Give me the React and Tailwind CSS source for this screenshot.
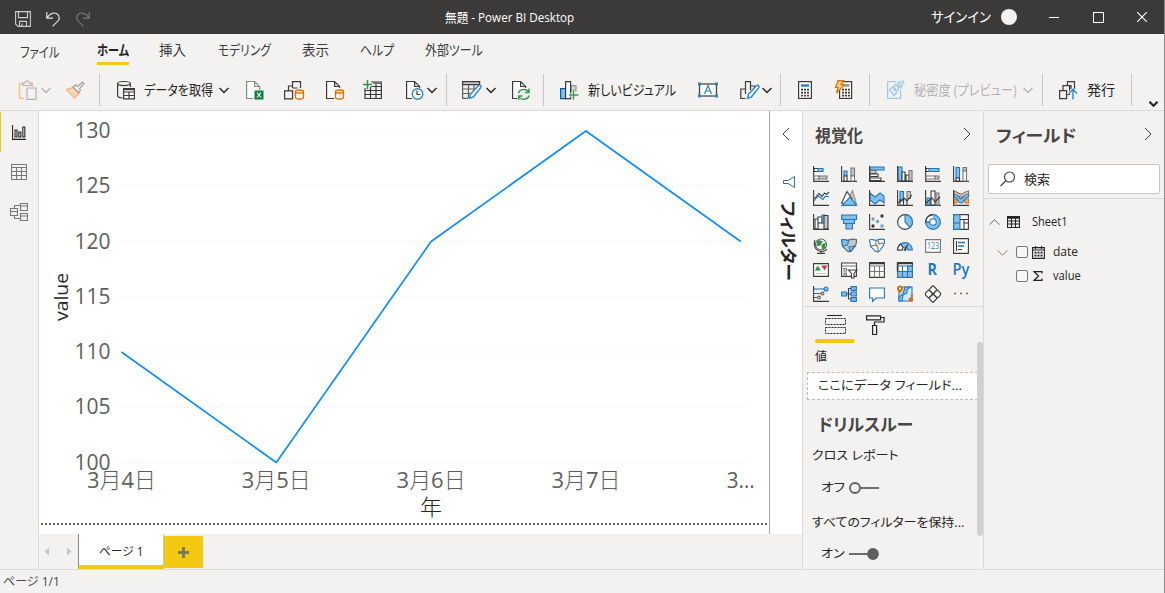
import { useLayoutEffect, useRef, useState } from "react";

// Stretches or squeezes a label so that it takes exactly `w` pixels
const Fit = ({ w, className = "", children }) => {
  const ref = useRef(null);
  const [scale, setScale] = useState(1);
  useLayoutEffect(() => {
    setScale(w / ref.current.offsetWidth);
  }, [w]);
  return (
    <div className="flex shrink-0 items-center" style={{ width: w }}>
      <span
        ref={ref}
        className={`block shrink-0 origin-left whitespace-nowrap leading-none ${className}`}
        style={{ transform: `scaleX(${scale})` }}
      >
        {children}
      </span>
    </div>
  );
};

const Chevron = ({ className = "", dir = "down", size = 10, width = 1.3 }) => {
  const paths = {
    down: "M0.5 3L5 7.5L9.5 3",
    up: "M0.5 7L5 2.5L9.5 7",
    left: "M7.5 0L2.5 5L7.5 10",
    right: "M2.5 0L7.5 5L2.5 10",
  };
  return (
    <svg
      className={`shrink-0 overflow-visible ${className}`}
      width={size}
      height={size}
      viewBox="0 0 10 10"
      fill="none"
      stroke="currentColor"
      strokeWidth={width}
    >
      <path d={paths[dir]} />
    </svg>
  );
};

const Icon = ({ className = "", children }) => (
  <svg
    className={`h-5 w-5 shrink-0 overflow-visible ${className}`}
    viewBox="0 0 20 20"
    fill="none"
    stroke="#3b3a39"
    strokeWidth="1.2"
  >
    {children}
  </svg>
);

const Sep = ({ className = "" }) => (
  <div className={`h-8 w-px shrink-0 bg-[#c8c6c4] ${className}`} />
);

const TitleBar = () => (
  <div className="flex h-[34px] shrink-0 items-center bg-[#3b3a39] text-[13px] text-white">
    <svg className="ml-[15px] mt-1 h-4 w-4" viewBox="0 0 16 16" fill="none" stroke="#d0cecc" strokeWidth="1.1">
      <path d="M.6.6h14.8v14.8H3L.6 13zM3.5.6v6h9v-6M4.5 15.4v-5h7v5M7 15.4v-3" />
    </svg>
    <svg className="ml-[14px] mt-1 h-4 w-4" viewBox="0 0 16 16" fill="none" stroke="#e1dfdd" strokeWidth="1.2">
      <path d="M1.8 1v6.2H8M2 7C5 2 9.500.8 12.500 3.200C15 5.500 14.500 8.500 12.800 10.200L7.500 15.400" />
    </svg>
    <svg className="ml-[14px] mt-1 h-4 w-4" viewBox="0 0 16 16" fill="none" stroke="#797775" strokeWidth="1.2">
      <path d="M14.200 1v6.200H8M14 7C11 2 6.500.8 3.500 3.200C1 5.500 1.500 8.500 3.200 10.200L8.500 15.400" />
    </svg>
    <div className="ml-[354px]">
      <Fit w={129}>無題 - Power BI Desktop</Fit>
    </div>
    <div className="ml-[357px]">
      <Fit w={60} className="text-[14px]">サインイン</Fit>
    </div>
    <div className="ml-[10px] h-4 w-4 rounded-full bg-[#f3f2f1]" />
    <div className="ml-8 h-px w-[10px] bg-white" />
    <div className="ml-[34px] h-[11px] w-[11px] border border-white" />
    <svg className="ml-[33px] h-[10px] w-[10px]" viewBox="0 0 10 10" stroke="#fff" strokeWidth="1.100">
      <path d="M0 0L10 10M10 0L0 10" />
    </svg>
  </div>
);

const Tabs = () => (
  <div className="flex h-8 shrink-0 items-center text-[14px] text-[#3b3a39]">
    <div className="ml-5 mt-1">
      <Fit w={39}>ファイル</Fit>
    </div>
    <div className="ml-[38px] flex h-full flex-col justify-between pt-[9px] pb-px font-bold text-[#252423]">
      <Fit w={32}>ホーム</Fit>
      <div className="h-[3px] bg-[#f2c811]" />
    </div>
    <div className="ml-[30px]"><Fit w={27}>挿入</Fit></div>
    <div className="ml-8"><Fit w={53}>モデリング</Fit></div>
    <div className="ml-[31px]"><Fit w={27}>表示</Fit></div>
    <div className="ml-[31px]"><Fit w={34}>ヘルプ</Fit></div>
    <div className="ml-[31px]"><Fit w={58}>外部ツール</Fit></div>
  </div>
);

const Cylinder = () => (
  <path
    d="M11 11.500v6c0 2 8 2 8 0v-6c0-2-8-2-8 0c0 2 8 2 8 0"
    fill="#fff4e5"
    stroke="#d8700f"
    strokeWidth="1.300"
  />
);

const Pencil = () => (
  <path
    d="M7.500 18.500l1-4.500l8-8.500c1.500-1 3.300.6 2.300 2.200L11.500 17z"
    fill="#e3f1fb"
    stroke="#2b88c8"
    strokeWidth="1.400"
  />
);

const Toolbar = () => (
  <div className="flex h-[44px] shrink-0 items-center pt-1 text-[14px] text-[#252423]">
    <Icon className="ml-[18px]">
      <path d="M6 18.500H1.500v-15H5M12 3.500h2.500V7" stroke="#f0c08f" strokeWidth="1.400" />
      <path d="M5 5.500V3h2c0-3 4-3 4 0h2v2.500zM9 8h9v11.300H9z" fill="#f3f2f1" stroke="#b5b3b1" />
    </Icon>
    <Chevron className="ml-[3px] text-[#b5b3b1]" />
    <Icon className="ml-[14px]">
      <path d="M1.500 9.500l6.500-2l6.500 6l-5 4.500z" fill="#f8d5b2" stroke="#eeb889" />
      <path d="M8 7l2.500-2l2 1.500l5-4.500l1.500 1.500l-4.500 5l1 1.500l-2 2.500z" fill="#f3f2f1" stroke="#a19f9d" />
    </Icon>
    <Sep className="ml-[14px]" />
    <Icon className="ml-4">
      <path d="M1.600 3.500v12c0 1.500 2 2.300 5 2.500M14.400 7V3.500M1.600 3.500c0-2.700 12.800-2.700 12.800 0c0 2.700-12.800 2.700-12.800 0" />
      <path d="M7.600 8.600h10.800v10.300H7.600zM7.600 12h10.800M7.600 15.500h10.800M13 12v7" fill="#fff" />
      <path d="M7.600 9.200h10.800" strokeWidth="2" />
    </Icon>
    <div className="ml-2"><Fit w={69}>データを取得</Fit></div>
    <Chevron className="ml-[6px]" width={1.4} />
    <Icon className="ml-4">
      <path d="M8 18.500H1.600v-17h8l5 5V10M9.600 1.500v5h5" fill="#fff" stroke="#8a8886" />
      <rect x="9.500" y="10.500" width="9" height="9" fill="#107c41" stroke="none" />
      <path d="M12 12.500l4 5M16 12.500l-4 5" stroke="#fff" />
    </Icon>
    <Icon className="ml-[19px]">
      <path d="M4.500 11V6h4M8.500 8V1.600h8V8M8.500 8h5M.6 10.800h8v8h-8z" />
      <g transform="translate(.5 0)"><Cylinder /></g>
    </Icon>
    <Icon className="ml-[21px]">
      <path d="M9 18.500H1.600v-17h8l5 5V8M9.600 1.500v5h5" fill="#fff" />
      <g transform="translate(-.5 0)"><Cylinder /></g>
    </Icon>
    <Icon className="ml-[18px]">
      <path d="M2 8v10.500h16.400V2H8M2 10.500h16.400M2 14.500h16.400M7.500 7v11.500M13 3v15.500M8 6.500h10.400" fill="none" />
      <path d="M10 3h8.400" stroke="#797775" strokeWidth="2" />
      <path d="M4.500 0v9M0 4.500h9" stroke="#f3f2f1" strokeWidth="3.500" />
      <path d="M4.500 0v9M0 4.500h9" stroke="#2d9346" strokeWidth="1.500" />
    </Icon>
    <Icon className="ml-[22px]">
      <path d="M7 18.500H1.600v-17h8l5 5V8M9.600 1.500v5h5" fill="#fff" />
      <circle cx="12.500" cy="14" r="5.300" fill="#fff" stroke="#2b88c8" strokeWidth="1.400" />
      <path d="M12 10.500v4h3.500" />
    </Icon>
    <Chevron className="ml-[2px]" width={1.4} />
    <Sep className="ml-[9px]" />
    <Icon className="ml-[15px]">
      <path d="M.6 1.600h17v3H.6z" fill="#c8c6c4" />
      <path d="M.6 4.600v13.800H6M17.600 4.600V6M.6 9h12M.6 13.500h8M6.500 4.600V18M12 4.600V10" stroke="#605e5c" />
      <Pencil />
    </Icon>
    <Chevron className="ml-[4px]" width={1.4} />
    <Icon className="ml-[15px]">
      <path d="M6 18.500H1.600v-17h8l5 5V8M9.600 1.500v5h5" fill="#fff" />
      <path d="M7.500 13.500c1-5 8-5 10-1.500M18 8.500v4h-4M18 15.500c-1 4.500-8 5-10 1.500M7.500 20v-4h4" stroke="#3b9a52" strokeWidth="1.500" />
    </Icon>
    <Sep className="ml-3" />
    <Icon className="ml-[15px]">
      <path d="M12 5.500h5V11h-5z" fill="#d2d0ce" stroke="#979593" />
      <path d="M1.600 8.600h5v10h-5z" fill="#83beec" stroke="#0063b1" />
      <path d="M6.600 1.600h5v17h-5z" fill="#fff" />
      <path d="M14.500 10v9.500M10 15h9.500" stroke="#f3f2f1" strokeWidth="3" />
      <path d="M14.500 10v9.500M10 15h9.500" stroke="#3b9a52" strokeWidth="1.500" />
    </Icon>
    <div className="ml-[9px]"><Fit w={88}>新しいビジュアル</Fit></div>
    <Icon className="ml-[22px]">
      <rect x="1.500" y="4" width="17" height="12" fill="#fff" />
      <path d="M6.500 14l3.500-8.500L13.500 14M7.800 11h4.500" stroke="#2b88c8" />
      <path d="M0 2.500h3v3H0zM17 2.500h3v3h-3zM0 14.500h3v3H0zM17 14.500h3v3h-3z" fill="#2b88c8" stroke="none" />
    </Icon>
    <Icon className="ml-[22px]">
      <path d="M5.500 18.500H.8V9h4.700M5.500 14V1.600h5V10M10.500 6h4v2" />
      <Pencil />
    </Icon>
    <Chevron className="ml-[2px]" width={1.4} />
    <Sep className="ml-2" />
    <Icon className="ml-[14px]">
      <rect x="3.600" y="1.600" width="12.800" height="16.800" fill="#fff" />
      <path d="M6 5.500h8" stroke="#2b88c8" strokeWidth="2.500" />
      <path d="M6 9.700h8M6 12.700h8M6 15.700h8" strokeWidth="1.800" strokeDasharray="2 1" />
    </Icon>
    <Icon className="ml-[19px]">
      <rect x="5.600" y="1.600" width="12" height="16.800" fill="#fff" />
      <path d="M9.500 5.500h6" stroke="#979593" strokeWidth="2.500" />
      <path d="M8 9.700h8M8 12.700h8M8 15.700h8" strokeWidth="1.800" strokeDasharray="2 1" />
      <path d="M4 .6h5.500L7 4.600h3.500L2.500 13l1.500-5.500H1.500z" fill="#fcd27a" stroke="#d8700f" />
    </Icon>
    <Sep className="ml-[15px]" />
    <Icon className="ml-4">
      <path d="M10 1.600H1.600v16.800h13V10" stroke="#9cc9e3" />
      <path d="M3.500 10l3-3l4.500 5.500l-3 3zM8.500 5.500c2-3 6 3 3.500 5c-2 0-5-4-3.500-5zM12 2c2-1 5 4 3.500 6c-2-1-4-3-3.500-6zM15 .5l3.500 4.500M18 .5l-1.500 2" stroke="#9cc9e3" fill="#e3eff6" />
    </Icon>
    <div className="ml-2"><Fit w={103} className="text-[#b5b3b1]">秘密度 (プレビュー)</Fit></div>
    <Chevron className="ml-[6px] text-[#b5b3b1]" />
    <Sep className="ml-[9px]" />
    <Icon className="ml-[15px]">
      <path d="M5 10V5.600h4.500V1.600h7V9M9.500 5.600h3.500V9M1.600 10.600h7v8h-7zM8.600 14.500h3V5.600" />
      <path d="M15 19.500V9.500M11 13.500l4-4.200l4 4.200" stroke="#f3f2f1" strokeWidth="3" />
      <path d="M15 19.500V9.500M11 13.500l4-4.200l4 4.200" stroke="#2b88c8" strokeWidth="1.400" />
    </Icon>
    <div className="ml-[9px]"><Fit w={28}>発行</Fit></div>
    <Sep className="ml-4" />
    <Chevron className="ml-[17px] mt-[26px]" size={9} width={2.4} />
  </div>
);

const Rail = () => (
  <div className="flex w-[39px] shrink-0 flex-col border-r border-[#dcdad8]">
    <div className="mt-px flex h-10 items-center border-l border-[#f2c811] pl-[11px]">
      <svg className="h-[15px] w-[15px]" viewBox="0 0 15 15" fill="none" stroke="#252423" strokeWidth="1.100">
        <path d="M.6 0v14.400H14M3 5h2v7H3zM6.800 7h2v5h-2zM10.800 2h2v10h-2z" />
      </svg>
    </div>
    <div className="flex h-10 items-center pl-[11px]">
      <svg className="h-4 w-4" viewBox="0 0 16 16" fill="none" stroke="#797775" strokeWidth="1">
        <path d="M.5.5h15v15H.5zM.5 3.500h15M.5 7.500h15M.5 11.500h15M5.500 3.500v12M10.500 3.500v12" />
      </svg>
    </div>
    <div className="flex h-10 items-center pl-[10px]">
      <svg className="h-[18px] w-[18px]" viewBox="0 0 18 18" fill="none" stroke="#797775" strokeWidth="1.100">
        <path d="M.5 5.500h7v7h-7zM.5 8.500h7M10.500.5h7v7h-7zM10.500 3h7M10.500 10.500h7v7h-7zM10.500 13h7M4.500 5.500v-3h6M4.500 12.500v3h6" />
      </svg>
    </div>
  </div>
);

const points = [
  { label: "3月4日", value: 110, w: 69 },
  { label: "3月5日", value: 100, w: 69 },
  { label: "3月6日", value: 120, w: 69 },
  { label: "3月7日", value: 130, w: 69 },
  { label: "3...", value: 120, w: 28 },
];
const ticks = [130, 125, 120, 115, 110, 105, 100];
const yOf = (v) => 131 + (130 - v) * 11.05;
const xOf = (i) => 121.500 + i * 154.800;

const Chart = () => (
  <svg className="block h-[423px] w-[730px] shrink-0 bg-white" viewBox="39 111 730 423">
    {ticks.map((t) => (
      <g key={t}>
        <line x1="116" x2="746" y1={yOf(t)} y2={yOf(t)} stroke="#e9e8e7" strokeDasharray="1 3" />
        <text x="74.500" y={yOf(t) + 7} fontSize="22" fill="#605e5c" textLength="36" lengthAdjust="spacingAndGlyphs">
          {t}
        </text>
      </g>
    ))}
    <polyline
      points={points.map((p, i) => `${xOf(i)},${yOf(p.value)}`).join(" ")}
      fill="none"
      stroke="#118dff"
      strokeWidth="1.700"
      strokeLinejoin="round"
    />
    {points.map((p, i) => (
      <text
        key={i}
        x={xOf(i) - p.w / 2}
        y="487.500"
        fontSize="22"
        fill="#605e5c"
        textLength={p.w}
        lengthAdjust="spacingAndGlyphs"
      >
        {[...p.label].map((c, j) => (
          <tspan key={j} fontWeight={c === "月" || c === "日" ? 300 : 400}>{c}</tspan>
        ))}
      </text>
    ))}
    <text x="431" y="514.500" fontSize="22" fontWeight="300" fill="#252423" textAnchor="middle">年</text>
    <text transform="translate(68 321) rotate(-90)" fontSize="18" fontWeight="500" fill="#252423" textLength="48" lengthAdjust="spacingAndGlyphs">
      value
    </text>
    <line x1="41" x2="769" y1="524" y2="524" stroke="#605e5c" strokeWidth="2" strokeDasharray="2 2" />
  </svg>
);

const FilterPane = () => (
  <div className="flex w-[34px] shrink-0 flex-col border-x border-l-[#a6a4a2] border-r-[#dcdad8] bg-white">
    <Chevron dir="left" className="ml-[10px] mt-[17px] text-[#3b3a39]" size={12} width={0.8} />
    <svg className="ml-[13px] mt-9 h-3 w-3" viewBox="0 0 12 12" fill="none" stroke="#3a6f9a" strokeWidth="1">
      <path d="M11.500.5v11L5 7.500H.5v-3H5z" />
    </svg>
    <div className="ml-[10px] mt-[13px] h-[80px] w-[17px]">
      <div className="origin-top-left translate-x-[17px] rotate-90">
        <Fit w={80} className="text-[17px] font-bold text-[#252423]">フィルター</Fit>
      </div>
    </div>
  </div>
);

const B = "#1f78bd";
const L = "#83beec";
const G = "#c8c6c4";
const K = "#3b3a39";
const axis = <path d="M.6 0v15.400H16" stroke={K} />;
const map = "M.6 2c3-1.500 5 1 7.500 0s5-1 7.300-.5c.5 3 0 5-1.400 7c-2 1-2 4-5 5.500L6 13c-1-2-4-3-4.500-5z";

const visuals = [
  <>{axis}<path d="M1 2.500h5v3H1z" stroke={K} fill="#fff" /><path d="M5 2.500h5v3H5z" fill={L} stroke={B} /><path d="M1 10h5v3H1z" stroke="#797775" fill="#fff" /><path d="M6 10h8v3H6z" stroke="#797775" fill={G} /></>,
  <>{axis}<path d="M3 5h3v5H3z" fill={L} stroke={B} /><path d="M3 10h3v5H3z" fill="#fff" stroke={K} /><path d="M10 2h3.500v8H10z" fill={G} stroke="#797775" /><path d="M10 10h3.500v5H10z" fill="#fff" stroke="#797775" /></>,
  <><path d="M1 1h14v3H1z" fill={L} stroke={B} /><path d="M1 4.500h6v3H1z" fill={G} stroke="#797775" /><path d="M1 8h8v2.500H1zM1 12h11v2.500H1z" fill="#fff" stroke={K} />{axis}</>,
  <><path d="M1 1h4v14H1z" fill={L} stroke={B} /><path d="M5 6h3v9H5zM9 9h3v6H9z" fill="#fff" stroke={K} /><path d="M12 4.500h3V15h-3z" fill={G} stroke="#797775" />{axis}</>,
  <>{axis}<path d="M1 2.500h4v3H1z" fill="#fff" stroke={K} /><path d="M4 2.500h10v3H4z" fill={L} stroke={B} /><path d="M1 10h9v3H1z" fill="#fff" stroke="#797775" /><path d="M10 10h4v3h-4z" fill={G} stroke="#797775" /></>,
  <>{axis}<path d="M3 1.500h3.500V12H3z" fill={L} stroke={B} /><path d="M3 12h3.500v3H3z" fill="#fff" stroke={K} /><path d="M10 1.500h3.500V5H10z" fill={G} stroke="#797775" /><path d="M10 5h3.500v10H10z" fill="#fff" stroke="#797775" /></>,

  <>{axis}<path d="M1 11l4-5l5 3.500l2-3h4" stroke={B} /><path d="M1 9l5-5.500l3 3l2.500-3.500l2 1.500L16 2" stroke={K} /></>,
  <><path d="M8 8l3.500-7.500L15.500 14z" fill={G} stroke="#979593" /><path d="M.6 13L6 1.500L11 9l-5 5z" fill="#fff" stroke={K} /><path d="M1 15.400L9 7l6.500 8.400z" fill={L} stroke={B} /></>,
  <><path d="M1 3l5 4l5-4l4 3v7l-4-3l-5 4l-5-4z" fill={L} stroke={B} />{axis}</>,
  <>{axis}<path d="M3 1.500h3.500V11H3z" fill={L} stroke={B} /><path d="M10 1.500h3.500v7H10z" fill={G} stroke="#797775" /><path d="M3 15V9M6.500 9v6M10 9v6" stroke={K} /><path d="M1 13l6-5l3 3l5-6" stroke={K} /></>,
  <>{axis}<path d="M2 8h3v7H2z" fill={L} stroke={B} /><path d="M6 1h4v14H6z" fill="#fff" stroke={K} /><path d="M11 3h3v12h-3z" fill={G} stroke="#797775" /><path d="M1 13l6-5l3 4l5-5" stroke={K} /></>,
  <><path d="M1 9h3v4H1zM12 9h3.500v4H12zM5 6h6v3H5z" fill="#f7b066" stroke="#d8700f" /><path d="M1 3c4 0 4 6 7 6s3-6 7.500-6v4c-4 0-4 6-7.500 6S5 7 1 7z" fill={L} stroke={B} /><path d="M1 1c3 0 4 3 7 3s4-3 7.500-3v3c-3 0-4 3-7.500 3S4 4 1 4z" fill={G} stroke="#797775" />{axis}</>,

  <><path d="M2 5h3v10H2zM5 3h4v6H5z" fill="#fff" stroke={K} /><path d="M9 1h3v8H9z" fill={L} stroke={B} /><path d="M11 1.500h4V15h-4z" fill={G} stroke={K} />{axis}</>,
  <><path d="M.6 1h15v4.500H.6zM2.500 5.500h11v4h-11zM5 9.500h6.500V15H5z" fill={L} stroke={B} /></>,
  <>{axis}<g stroke="none"><circle cx="4" cy="5" r="1.700" fill="#6ba4d0" /><circle cx="13" cy="2" r="1.700" fill={K} /><circle cx="8.500" cy="7.500" r="1.700" fill="#6ba4d0" /><circle cx="4" cy="12" r="1.700" fill={K} /><circle cx="13" cy="12" r="1.700" fill="#6ba4d0" /></g></>,
  <><circle cx="8" cy="8" r="7.400" fill="#fff" stroke={K} /><path d="M8 .6a7.400 7.400 0 0 1 5 12.800L8 8z" fill={L} stroke={B} /></>,
  <><circle cx="8" cy="8" r="5.500" stroke={L} strokeWidth="4" /><path d="M8 2.500A5.500 5.500 0 0 0 2.500 8" stroke="#fff" strokeWidth="4" /><circle cx="8" cy="8" r="7.400" stroke={B} /><circle cx="8" cy="8" r="3.300" stroke={B} /><path d="M8 .6A7.400 7.400 0 0 0 .6 8h4" stroke={K} /></>,
  <><path d="M.6.6h14.800v14.800H.6z" fill="#fff" stroke={K} /><path d="M.6.6h6.400v14.800H.6z" fill={L} stroke={B} /><path d="M.6 9H7" stroke={B} /><path d="M7 5.500h8.400M11 5.500v10M11 9h4.400" stroke={K} /></>,

  <><circle cx="8" cy="6.500" r="5.500" fill="#fff" stroke="#605e5c" /><path d="M5 2.500l4 1l-2 3.500l-3 .5zM9 7l3-1.500l-.5 4l-2 1.500z" fill="#2d9346" stroke="#2d9346" /><path d="M2 2C0 6 1.500 12.500 8 13.500c3 0 5-1 6-2.500M8 13.500v2M4 15.400h8" stroke={K} /></>,
  <><path d={map} fill={G} stroke="#605e5c" /><path d="M.6 2c3-1.500 5 1 7 0l-1 5l-5 1zM8 9l6-1c-2 2-2 4-5 5.500z" fill={L} stroke={B} /></>,
  <><path d={map} fill="#fff" stroke={B} /><path d="M7 2v5l-5 1M9 2l1 4l5-1M7 7l2 2v5" stroke="#797775" /></>,
  <><path d="M.6 12a7.400 7.400 0 0 1 14.800 0H11a3 3 0 0 0-6 0z" fill={L} stroke={B} /><path d="M.6 12a7.400 7.400 0 0 1 3-6L6 9.500L5 12zM7 12.500l4-6" fill="#fff" stroke={K} /><path d="M6.500 12l4-5l-1.500 6z" fill={K} stroke="none" /></>,
  <><path d="M.6 1.600h14.800v12.800H.6z" fill="#fff" stroke="#797775" /><text x="2" y="11.300" textLength="12" lengthAdjust="spacingAndGlyphs" fontSize="8.500" fill={B} stroke="none">123</text></>,
  <><path d="M.6.6h14.800v14.800H.6z" fill="#fff" stroke={K} /><path d="M3.500 3v10M5 11.500h4" stroke={K} /><path d="M5 4.500h7M5 8h6" stroke={B} strokeWidth="1.500" /></>,

  <><path d="M.6 1.600h14.800v12.800H.6z" fill="#fff" stroke={K} /><path d="M1.800 8.500l3-5l3 5z" fill="#2d9346" stroke="none" /><path d="M8.500 3.500h6l-3 5z" fill="#d13438" stroke="none" /><path d="M3 11.500h10" stroke={G} /></>,
  <><path d="M.6 1h14.800v13.400H.6z" fill="#fff" stroke={K} /><path d="M.6 4h14.800M3 6.500h2.500V9H3zM3 11h2.500v2H3z" stroke="#797775" /><path d="M7.500 8h8.500l-3 3.500V16h-2.500v-4.500z" fill="#fff" stroke={K} /></>,
  <><path d="M.6.6h14.800v14.800H.6z" fill="#fff" stroke={K} /><path d="M.6 4h14.800M.6 9.500h14.800M5.500 4v11.400M10.500 4v11.400" stroke="#797775" /><path d="M.6 1.500h14.800" stroke={K} strokeWidth="1.600" /></>,
  <><path d="M.6.6h14.800v14.800H.6z" fill="#fff" stroke={K} /><path d="M.6 9.500h10V4h4.800v11.400H.6z" fill={L} stroke={B} /><path d="M.6 4h14.800M.6 9.500h14.800M5.500 4v11.400M10.500 4v11.400" stroke={B} /><path d="M.6 1.500h14.800M.6 1v8.500" stroke={K} strokeWidth="1.600" /></>,
  <text x="2.500" y="13.300" fontSize="16" fontWeight="700" fill={B} stroke="none" textLength="9.500" lengthAdjust="spacingAndGlyphs">R</text>,
  <text x="-.5" y="12.500" fontSize="16" fontWeight="600" fill={B} stroke="none" textLength="17" lengthAdjust="spacingAndGlyphs">Py</text>,

  <>{axis}<path d="M1 3h10" stroke={B} /><circle cx="13" cy="3" r="2" fill={L} stroke={B} /><path d="M1 7.500h7M1 11.500h3" stroke="#605e5c" /><circle cx="9.500" cy="7.500" r="1.400" stroke="#605e5c" /><circle cx="6" cy="11.500" r="1.400" stroke="#605e5c" /></>,
  <><path d="M5 8h5M7.500 2.500V13M7.500 2.500H10M7.500 13H10" stroke={K} /><path d="M.6 6h5v4h-5zM10 .6h5.400v3.800H10zM10 6h5.400v4H10zM10 11.600h5.400v3.800H10z" fill={L} stroke={B} /></>,
  <path d="M.6 2h14.800v10H7l-3.500 3.500V12H.6z" fill="#fff" stroke={B} />,
  <><path d="M2 1h13v14H2z" fill="#d3e8f8" stroke={B} /><path d="M8 1h5l-3 3v3L6 9l-1 6H2v-4l4-3z" fill={L} stroke={B} /><path d="M3-.5a3 3 0 0 1 3 3c0 2-3 5-3 5s-3-3-3-5a3 3 0 0 1 3-3z" fill="#d8700f" stroke="none" /><circle cx="3" cy="2.500" r="1" fill="#fff" stroke="none" /><circle cx="14" cy="13.500" r="2.300" fill="#d8700f" stroke="none" /><circle cx="15" cy="9.500" r="1.200" fill="#d8700f" stroke="none" /></>,
  <g transform="rotate(45 8 8)" fill="#fff" stroke={K} strokeWidth="1.200">
    <rect x="2" y="2" width="6" height="6" rx="1" />
    <rect x="8" y="2" width="6" height="6" rx="2" />
    <rect x="2" y="8" width="6" height="6" rx="2" />
    <rect x="8" y="8" width="6" height="6" rx="1" />
  </g>,
  <path d="M1 7.500h2M7 7.500h2M13 7.500h2" stroke="#a05a2c" strokeWidth="1.600" />,
];

const VizPane = () => (
  <div className="flex w-[181px] shrink-0 flex-col border-r border-[#dcdad8] text-[12px] text-[#252423]">
    <div className="flex h-[50px] shrink-0 items-center pb-[2px] pl-3">
      <Fit w={48} className="text-[17px] font-bold text-[#484644]">視覚化</Fit>
      <Chevron dir="right" size={12} width={0.8} className="ml-[98px] -mt-[3px] text-[#3b3a39]" />
    </div>
    <div className="grid h-[146px] shrink-0 grid-cols-[repeat(6,28px)] auto-rows-[24px] border-b border-[#dcdad8] pl-[10px] pt-[5px]">
      {visuals.map((v, i) => (
        <svg key={i} className="h-4 w-4 overflow-visible" viewBox="0 0 16 16" fill="none" strokeWidth="1.100">
          {v}
        </svg>
      ))}
    </div>
    <div className="flex min-h-0 flex-1">
      <div className="flex w-[174px] flex-col">
        <div className="flex h-[36px] shrink-0 pl-3">
          <div className="flex w-10 flex-col items-center justify-between pt-2">
            <svg className="h-5 w-[21px]" viewBox="0 0 21 20" fill="none" stroke="#252423">
              <path d="M2 .5h15" />
              <path d="M.5 3.500h20v6H.5zM.5 12.500h20v6H.5z" strokeDasharray="2 1" />
            </svg>
            <div className="h-1 w-10 rounded-full bg-[#f2c811]" />
          </div>
          <svg className="ml-[11px] mt-2 h-5 w-[19px]" viewBox="0 0 19 20" fill="none" stroke="#252423" strokeWidth="1.200">
            <path d="M.6.8h14v4H.6zM14.600 2.500h3.500v4.500H8.500v3.500M6.600 10.500h4v9h-4z" />
          </svg>
        </div>
        <div className="mt-[8px] pl-3"><Fit w={12}>値</Fit></div>
        <div className="ml-1 mt-[9px] flex h-7 w-[171px] shrink-0 items-center border border-dashed border-[#bebbb8] bg-white pl-[10px]">
          <Fit w={144}>ここにデータ フィールド...</Fit>
        </div>
        <div className="ml-[15px] mt-4"><Fit w={95} className="text-[17px] font-bold text-[#484644]">ドリルスルー</Fit></div>
        <div className="ml-[9px] mt-[17px]"><Fit w={87}>クロス レポート</Fit></div>
        <div className="ml-[18px] mt-[20px] flex items-center">
          <Fit w={24}>オフ</Fit>
          <svg className="ml-1 h-3 w-[30px]" viewBox="0 0 30 12" fill="none" stroke="#605e5c" strokeWidth="1.800">
            <circle cx="6" cy="6" r="5" />
            <path d="M11 6h19" />
          </svg>
        </div>
        <div className="ml-[9px] mt-[23px]"><Fit w={153}>すべてのフィルターを保持...</Fit></div>
        <div className="ml-[18px] mt-[19px] flex items-center">
          <Fit w={24}>オン</Fit>
          <svg className="ml-1 h-3 w-[30px]" viewBox="0 0 30 12" fill="#605e5c" stroke="#605e5c" strokeWidth="1.800">
            <circle cx="24" cy="6" r="5" />
            <path d="M0 6h19" />
          </svg>
        </div>
      </div>
      <div className="mt-[35px] h-[194px] w-[6px] rounded-full bg-[#d2d0ce]" />
    </div>
  </div>
);

const Checkbox = () => <div className="h-3 w-3 shrink-0 rounded-[2px] border border-[#797775] bg-white/40" />;

const FieldsPane = () => (
  <div className="flex w-[180px] shrink-0 flex-col text-[12px] text-[#252423]">
    <div className="flex h-[50px] shrink-0 items-center pb-[2px] pl-3">
      <Fit w={80} className="text-[17px] font-bold text-[#484644]">フィールド</Fit>
      <Chevron dir="right" size={12} width={0.8} className="ml-[66px] -mt-[3px] text-[#3b3a39]" />
    </div>
    <div className="ml-1 mt-[3px] flex h-[30px] w-[172px] shrink-0 items-center rounded-[2px] border border-[#c8c6c4] bg-white pl-[11px]">
      <svg className="h-4 w-4" viewBox="0 0 16 16" fill="none" stroke="#3b3a39" strokeWidth="1.100">
        <circle cx="9.500" cy="6" r="5" />
        <path d="M6 9.500L.5 15" />
      </svg>
      <div className="ml-2"><Fit w={26} className="text-[13px]">検索</Fit></div>
    </div>
    <div className="mt-1 h-px shrink-0 bg-[#dcdad8]" />
    <div className="mt-[11px] flex h-6 items-center pl-[5px]">
      <Chevron dir="up" size={11} width={0.9} className="text-[#605e5c]" />
      <svg className="ml-[7px] h-3 w-[13px]" viewBox="0 0 13 12" fill="none" stroke="#252423" strokeWidth="1.100">
        <path d="M.5.5h12v11H.5zM.5 5h12M.5 8h12M4.500 2v9.500M8.500 2v9.500" />
        <path d="M0 1.500h13" strokeWidth="2.500" />
      </svg>
      <div className="ml-3 pb-px"><Fit w={36}>Sheet1</Fit></div>
    </div>
    <div className="mt-[6px] flex h-6 items-center pl-[13px]">
      <Chevron size={11} width={0.9} className="text-[#a07848]" />
      <div className="ml-2"><Checkbox /></div>
      <svg className="ml-1 h-[13px] w-[13px]" viewBox="0 0 13 13" fill="none" stroke="#252423" strokeWidth="1.100">
        <path d="M.6 1.600h11.800v10.800H.6zM.6 4h11.800M3.500 0v3M9.500 0v3" />
        <path d="M2.500 6.700h8M2.500 9.700h8" strokeWidth="1.800" strokeDasharray="2 1" />
      </svg>
      <div className="ml-2"><Fit w={25}>date</Fit></div>
    </div>
    <div className="flex h-6 items-center pl-8">
      <Checkbox />
      <svg className="ml-[5px] h-[10px] w-[10px]" viewBox="0 0 10 10" fill="none" stroke="#252423" strokeWidth="1.300">
        <path d="M9 2.500V.7H1.200L5.500 5L1.200 9.300H9V7.500" />
      </svg>
      <div className="ml-[10px]"><Fit w={28}>value</Fit></div>
    </div>
  </div>
);

const PageTabs = () => (
  <div className="flex h-[35px] shrink-0 text-[12px] text-[#252423]">
    <svg className="ml-[5px] mt-[13px] h-[9px] w-[29px]" viewBox="0 0 29 9" fill="#c8c6c4">
      <path d="M5 .5v8L.5 4.500zM23 .5v8l4.500-4z" />
    </svg>
    <div className="ml-[5px] flex w-[86px] items-center border-x border-b-4 border-b-[#f2c811] border-l-[#8a8886] border-r-[#c8c6c4] bg-white pl-5 pt-[5px]">
      <Fit w={45}>ページ 1</Fit>
    </div>
    <div className="mt-[2px] flex h-8 w-[39px] items-center justify-center bg-[#f2c811]">
      <svg className="h-[11px] w-[11px]" viewBox="0 0 11 11" stroke="#797775" strokeWidth="3">
        <path d="M5.500 0v11M0 5.500h11" />
      </svg>
    </div>
  </div>
);

const App = () => (
  <div className="flex h-[593px] w-[1165px] flex-col overflow-hidden border-r border-[#8a8886] bg-[#f3f2f1] font-['Open_Sans','Noto_Sans_CJK_JP',sans-serif] [font-feature-settings:'palt']">
    <TitleBar />
    <Tabs />
    <Toolbar />
    <div className="h-px shrink-0 bg-[#dcdad8]" />
    <div className="flex h-[458px] shrink-0">
      <Rail />
      <div className="flex w-[764px] shrink-0 flex-col">
        <div className="flex h-[423px] shrink-0">
          <Chart />
          <FilterPane />
        </div>
        <div className="flex flex-col border-r border-[#dcdad8]">
          <PageTabs />
        </div>
      </div>
      <VizPane />
      <FieldsPane />
    </div>
    <div className="flex h-6 items-center border-t border-[#dcdad8] pl-[3px] text-[12px] text-[#484644]">
      <Fit w={57}>ページ 1/1</Fit>
    </div>
  </div>
);

export default App;
